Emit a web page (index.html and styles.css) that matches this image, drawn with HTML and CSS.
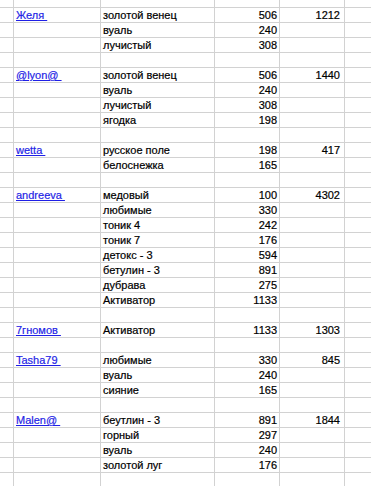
FILE: index.html
```html
<!DOCTYPE html>
<html lang="ru">
<head>
<meta charset="utf-8">
<title>Sheet</title>
<link rel="stylesheet" href="styles.css">
</head>
<body>
<div class="sheet">
  <div class="row top"><div class="c"></div><div class="c"></div><div class="c"></div><div class="c"></div><div class="c"></div><div class="c"></div></div>

  <div class="row"><div class="c"></div><div class="c"><a class="link" href="#">Желя&nbsp;</a></div><div class="c">золотой венец</div><div class="c num">506</div><div class="c tot">1212</div><div class="c"></div></div>
  <div class="row"><div class="c"></div><div class="c"></div><div class="c">вуаль</div><div class="c num">240</div><div class="c tot"></div><div class="c"></div></div>
  <div class="row"><div class="c"></div><div class="c"></div><div class="c">лучистый</div><div class="c num">308</div><div class="c tot"></div><div class="c"></div></div>
  <div class="row"><div class="c"></div><div class="c"></div><div class="c"></div><div class="c num"></div><div class="c tot"></div><div class="c"></div></div>

  <div class="row"><div class="c"></div><div class="c"><a class="link" href="#">@lyon@&nbsp;</a></div><div class="c">золотой венец</div><div class="c num">506</div><div class="c tot">1440</div><div class="c"></div></div>
  <div class="row"><div class="c"></div><div class="c"></div><div class="c">вуаль</div><div class="c num">240</div><div class="c tot"></div><div class="c"></div></div>
  <div class="row"><div class="c"></div><div class="c"></div><div class="c">лучистый</div><div class="c num">308</div><div class="c tot"></div><div class="c"></div></div>
  <div class="row"><div class="c"></div><div class="c"></div><div class="c">ягодка</div><div class="c num">198</div><div class="c tot"></div><div class="c"></div></div>
  <div class="row"><div class="c"></div><div class="c"></div><div class="c"></div><div class="c num"></div><div class="c tot"></div><div class="c"></div></div>

  <div class="row"><div class="c"></div><div class="c"><a class="link" href="#">wetta&nbsp;</a></div><div class="c">русское поле</div><div class="c num">198</div><div class="c tot">417</div><div class="c"></div></div>
  <div class="row"><div class="c"></div><div class="c"></div><div class="c">белоснежка</div><div class="c num">165</div><div class="c tot"></div><div class="c"></div></div>
  <div class="row"><div class="c"></div><div class="c"></div><div class="c"></div><div class="c num"></div><div class="c tot"></div><div class="c"></div></div>

  <div class="row"><div class="c"></div><div class="c"><a class="link" href="#">andreeva&nbsp;</a></div><div class="c">медовый</div><div class="c num">100</div><div class="c tot">4302</div><div class="c"></div></div>
  <div class="row"><div class="c"></div><div class="c"></div><div class="c">любимые</div><div class="c num">330</div><div class="c tot"></div><div class="c"></div></div>
  <div class="row"><div class="c"></div><div class="c"></div><div class="c">тоник 4</div><div class="c num">242</div><div class="c tot"></div><div class="c"></div></div>
  <div class="row"><div class="c"></div><div class="c"></div><div class="c">тоник 7</div><div class="c num">176</div><div class="c tot"></div><div class="c"></div></div>
  <div class="row"><div class="c"></div><div class="c"></div><div class="c">детокс - 3</div><div class="c num">594</div><div class="c tot"></div><div class="c"></div></div>
  <div class="row"><div class="c"></div><div class="c"></div><div class="c">бетулин - 3</div><div class="c num">891</div><div class="c tot"></div><div class="c"></div></div>
  <div class="row"><div class="c"></div><div class="c"></div><div class="c">дубрава</div><div class="c num">275</div><div class="c tot"></div><div class="c"></div></div>
  <div class="row"><div class="c"></div><div class="c"></div><div class="c">Активатор</div><div class="c num">1133</div><div class="c tot"></div><div class="c"></div></div>
  <div class="row"><div class="c"></div><div class="c"></div><div class="c"></div><div class="c num"></div><div class="c tot"></div><div class="c"></div></div>

  <div class="row"><div class="c"></div><div class="c"><a class="link" href="#">7гномов&nbsp;</a></div><div class="c">Активатор</div><div class="c num">1133</div><div class="c tot">1303</div><div class="c"></div></div>
  <div class="row"><div class="c"></div><div class="c"></div><div class="c"></div><div class="c num"></div><div class="c tot"></div><div class="c"></div></div>

  <div class="row"><div class="c"></div><div class="c"><a class="link" href="#">Tasha79&nbsp;</a></div><div class="c">любимые</div><div class="c num">330</div><div class="c tot">845</div><div class="c"></div></div>
  <div class="row"><div class="c"></div><div class="c"></div><div class="c">вуаль</div><div class="c num">240</div><div class="c tot"></div><div class="c"></div></div>
  <div class="row"><div class="c"></div><div class="c"></div><div class="c">сияние</div><div class="c num">165</div><div class="c tot"></div><div class="c"></div></div>
  <div class="row"><div class="c"></div><div class="c"></div><div class="c"></div><div class="c num"></div><div class="c tot"></div><div class="c"></div></div>

  <div class="row"><div class="c"></div><div class="c"><a class="link" href="#">Malen@&nbsp;</a></div><div class="c">беутлин - 3</div><div class="c num">891</div><div class="c tot">1844</div><div class="c"></div></div>
  <div class="row"><div class="c"></div><div class="c"></div><div class="c">горный</div><div class="c num">297</div><div class="c tot"></div><div class="c"></div></div>
  <div class="row"><div class="c"></div><div class="c"></div><div class="c">вуаль</div><div class="c num">240</div><div class="c tot"></div><div class="c"></div></div>
  <div class="row"><div class="c"></div><div class="c"></div><div class="c">золотой луг</div><div class="c num">176</div><div class="c tot"></div><div class="c"></div></div>
  <div class="row"><div class="c"></div><div class="c"></div><div class="c"></div><div class="c num"></div><div class="c tot"></div><div class="c"></div></div>
</div>
</body>
</html>
```

FILE: styles.css
```css
html, body {
  margin: 0;
  padding: 0;
  background: #ffffff;
}

.sheet {
  width: 371px;
  height: 486px;
  overflow: hidden;
  font-family: "Liberation Sans", Arial, sans-serif;
  font-size: 11px;
  color: #000000;
  -webkit-text-stroke: 0.2px currentColor;
}

.row {
  display: grid;
  grid-template-columns: 14px 87px 114px 65px 65px 1fr;
  height: 15px;
}

.row.top {
  height: 8px;
}

.c {
  box-sizing: border-box;
  border-right: 1px solid #d2d2d2;
  border-bottom: 1px solid #d2d2d2;
  padding: 0 0 0 2px;
  line-height: 14px;
  white-space: nowrap;
  overflow: hidden;
}

.c:last-child {
  border-right: none;
}

.num {
  text-align: right;
  padding: 0 2px 0 0;
}

.tot {
  text-align: right;
  padding: 0 4px 0 0;
}

.link {
  color: #1f1fe6;
  text-decoration: underline;
  text-underline-offset: 1px;
}
```
